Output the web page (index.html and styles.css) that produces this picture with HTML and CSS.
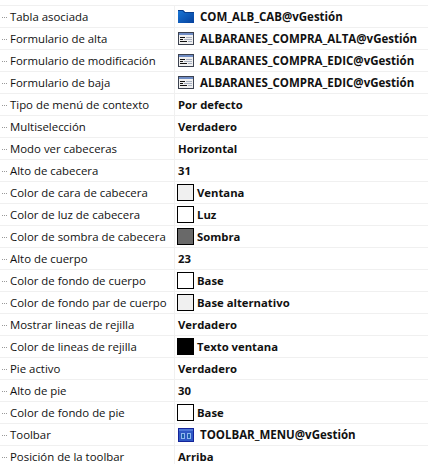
FILE: index.html
```html
<!DOCTYPE html>
<html lang="es">
<head>
  <meta charset="UTF-8">
  <title>Propiedades</title>
  <link rel="stylesheet" href="styles.css">
</head>
<body>
  <div class="grid">
    <div class="row">
      <div class="name">Tabla asociada</div>
      <div class="value">
        <svg class="icon" viewBox="0 0 16 13"><defs><linearGradient id="folder" x1="0" y1="0" x2="1" y2="1"><stop offset="0" stop-color="#1a78d8"/><stop offset="1" stop-color="#05409c"/></linearGradient></defs><path d="M0 0h5l2 2h9v11H0z" fill="url(#folder)"/><path d="M0 0h5l2 2h9v1H6.5L4.5 1H0z" fill="#0a3f8f"/></svg>
        <span class="ref">COM_ALB_CAB@vGestión</span>
      </div>
    </div>
    <div class="row">
      <div class="name">Formulario de alta</div>
      <div class="value">
        <svg class="icon" viewBox="0 0 16 13"><rect x=".5" y=".5" width="15" height="12" fill="#f0f0f0" stroke="#3c4250"/><rect x="1" y="1" width="14" height="2" fill="#6f8cc4"/><path d="M2 5.5h5M2 7.5h3M2 9.500h7" stroke="#111"/><path d="M8 5.5h6M6 7.5h8M10 9.500h4" stroke="#a8b0c0"/></svg>
        <span class="ref">ALBARANES_COMPRA_ALTA@vGestión</span>
      </div>
    </div>
    <div class="row">
      <div class="name">Formulario de modificación</div>
      <div class="value">
        <svg class="icon" viewBox="0 0 16 13"><rect x=".5" y=".5" width="15" height="12" fill="#f0f0f0" stroke="#3c4250"/><rect x="1" y="1" width="14" height="2" fill="#6f8cc4"/><path d="M2 5.5h5M2 7.5h3M2 9.500h7" stroke="#111"/><path d="M8 5.5h6M6 7.5h8M10 9.500h4" stroke="#a8b0c0"/></svg>
        <span class="ref">ALBARANES_COMPRA_EDIC@vGestión</span>
      </div>
    </div>
    <div class="row">
      <div class="name">Formulario de baja</div>
      <div class="value">
        <svg class="icon" viewBox="0 0 16 13"><rect x=".5" y=".5" width="15" height="12" fill="#f0f0f0" stroke="#3c4250"/><rect x="1" y="1" width="14" height="2" fill="#6f8cc4"/><path d="M2 5.5h5M2 7.5h3M2 9.500h7" stroke="#111"/><path d="M8 5.5h6M6 7.5h8M10 9.500h4" stroke="#a8b0c0"/></svg>
        <span class="ref">ALBARANES_COMPRA_EDIC@vGestión</span>
      </div>
    </div>
    <div class="row"><div class="name">Tipo de menú de contexto</div><div class="value">Por defecto</div></div>
    <div class="row"><div class="name">Multiselección</div><div class="value">Verdadero</div></div>
    <div class="row"><div class="name">Modo ver cabeceras</div><div class="value">Horizontal</div></div>
    <div class="row"><div class="name">Alto de cabecera</div><div class="value">31</div></div>
    <div class="row"><div class="name">Color de cara de cabecera</div><div class="value"><span class="swatch window"></span>Ventana</div></div>
    <div class="row"><div class="name">Color de luz de cabecera</div><div class="value"><span class="swatch"></span>Luz</div></div>
    <div class="row"><div class="name">Color de sombra de cabecera</div><div class="value"><span class="swatch shadow"></span>Sombra</div></div>
    <div class="row"><div class="name">Alto de cuerpo</div><div class="value">23</div></div>
    <div class="row"><div class="name">Color de fondo de cuerpo</div><div class="value"><span class="swatch"></span>Base</div></div>
    <div class="row"><div class="name">Color de fondo par de cuerpo</div><div class="value"><span class="swatch window"></span>Base alternativo</div></div>
    <div class="row"><div class="name">Mostrar lineas de rejilla</div><div class="value">Verdadero</div></div>
    <div class="row"><div class="name">Color de lineas de rejilla</div><div class="value"><span class="swatch black"></span>Texto ventana</div></div>
    <div class="row"><div class="name">Pie activo</div><div class="value">Verdadero</div></div>
    <div class="row"><div class="name">Alto de pie</div><div class="value">30</div></div>
    <div class="row"><div class="name">Color de fondo de pie</div><div class="value"><span class="swatch"></span>Base</div></div>
    <div class="row">
      <div class="name">Toolbar</div>
      <div class="value">
        <svg class="icon icon_toolbar" viewBox="0 0 16 14"><rect width="16" height="14" fill="#14249a"/><rect x="1" y="1" width="14" height="2" fill="#4f78d8"/><rect x="1" y="3" width="14" height="10" fill="#2e58c4"/><rect x="3" y="5" width="4" height="6" fill="#8fb8ee"/><rect x="9" y="5" width="4" height="6" fill="#8fb8ee"/><rect x="4" y="6" width="2" height="4" fill="#1b5fa8"/><rect x="10" y="6" width="2" height="4" fill="#1b5fa8"/></svg>
        <span class="ref">TOOLBAR_MENU@vGestión</span>
      </div>
    </div>
    <div class="row"><div class="name">Posición de la toolbar</div><div class="value">Arriba</div></div>
  </div>
</body>
</html>
```
FILE: styles.css
```css
* {
  margin: 0;
  padding: 0;
  box-sizing: border-box;
}
body {
  background-color: #fff;
  color: #111;
  font-family: "Open Sans", "Noto Sans", sans-serif;
  font-size: 11.4px;
  overflow: hidden;
}
.grid {
  padding-top: 5px;
}
.row {
  display: grid;
  grid-template-columns: 175px 1fr;
  height: 22px;
  border-top: 1px solid #f0f0f0;
}
.name {
  display: flex;
  align-items: center;
  padding-left: 10px;
  border-right: 1px solid #f0f0f0;
  position: relative;
  white-space: nowrap;
}
/* puntos del arbol a la izquierda */
.name::before {
  content: '';
  position: absolute;
  left: 2px;
  top: 50%;
  width: 5px;
  border-top: 1px dotted #999;
}
.value {
  display: flex;
  align-items: center;
  padding-left: 3px;
  font-size: 11.3px;
  font-weight: 700;
  white-space: nowrap;
}
.ref {
  font-size: 11.5px;
}
.icon {
  width: 16px;
  height: 13px;
  margin-right: 6px;
  flex-shrink: 0;
}
.icon_toolbar {
  height: 14px;
}
.swatch {
  width: 17px;
  height: 17px;
  margin-left: -1px;
  margin-right: 3px;
  border: 1px solid #000;
  background-color: #fff;
  flex-shrink: 0;
}
.swatch.window {
  background-color: #f0f0f0;
}
.swatch.shadow {
  background-color: #696969;
}
.swatch.black {
  background-color: #000;
}
```
